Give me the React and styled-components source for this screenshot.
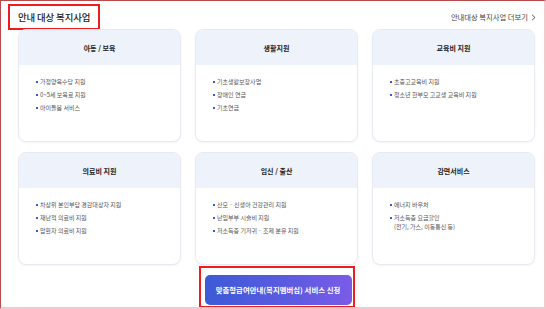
import React from "react";
import styled, { createGlobalStyle } from "styled-components";

const GlobalStyle = createGlobalStyle`
  html, body {
    margin: 0;
    padding: 0;
    background: #ffffff;
  }
  * {
    box-sizing: border-box;
  }
`;

const Frame = styled.div`
  width: 546px;
  height: 309px;
  overflow: hidden;
  border-left: 1px solid #b8494b;
  border-top: 1px solid #b8494b;
  border-right: 2px solid #f2cacd;
  border-bottom: 2px solid #f2cacd;
  padding: 3px 9px 0 17px;
  font-family: "Noto Sans CJK KR", "Noto Sans", sans-serif;
  color: #222;
`;

const TopRow = styled.div`
  display: flex;
  justify-content: space-between;
  align-items: center;
`;

const Title = styled.h2`
  margin: 0 0 0 -10px;
  height: 26px;
  padding: 0 8px;
  border: 2px solid #ee1c1c;
  display: flex;
  align-items: center;
  font-size: 9.4px;
  font-weight: 500;
  color: #222;
  letter-spacing: -0.1px;
`;

const MoreLink = styled.a`
  display: flex;
  align-items: center;
  gap: 3px;
  font-size: 7.3px;
  color: #444;
  text-decoration: none;
  margin-right: -1px;
`;

const Grid = styled.div`
  margin-top: -1px;
  display: grid;
  grid-template-columns: repeat(3, 1fr);
  grid-auto-rows: 113px;
  column-gap: 14px;
  row-gap: 10px;
`;

const Card = styled.div`
  border: 1px solid #e7eaf0;
  border-radius: 8px;
  overflow: hidden;
  background: #fff;
  box-shadow: 0 1px 2px rgba(30, 40, 80, 0.05);
`;

const CardHead = styled.div`
  height: 35px;
  background: #eef2fb;
  display: flex;
  align-items: center;
  justify-content: center;
  font-size: 7px;
  font-weight: 700;
  color: #222;
`;

const List = styled.ul`
  list-style: none;
  margin: 0;
  padding: 12px 8px 0 17px;
  display: flex;
  flex-direction: column;
  gap: 4px;
`;

const Item = styled.li`
  display: flex;
  gap: 2px;
  font-size: 6px;
  line-height: 9px;
  color: #555;
`;

const Bullet = styled.span`
  flex: none;
  width: 2px;
  height: 2px;
  margin-top: 4px;
  background: #3a5bd9;
`;

const Bottom = styled.div`
  display: flex;
  justify-content: center;
  margin-top: 1px;
`;

const Highlight = styled.div`
  border: 2px solid #ee1c1c;
  padding: 6px 1px 1px 4px;
`;

const ApplyButton = styled.button`
  width: 147px;
  height: 30px;
  border: 0;
  border-radius: 5px;
  background: linear-gradient(90deg, #3d5ad6 0%, #5a5be0 55%, #7b5be8 100%);
  color: #fff;
  font-family: "Noto Sans CJK KR", "Noto Sans", sans-serif;
  font-size: 7.4px;
  font-weight: 700;
  padding: 0;
  cursor: pointer;
`;

const cards = [
  { title: "아동 / 보육", items: [["가정양육수당 지원"], ["0~5세 보육료 지원"], ["아이돌봄 서비스"]] },
  { title: "생활지원", items: [["기초생활보장사업"], ["장애인 연금"], ["기초연금"]] },
  { title: "교육비 지원", items: [["초중고교육비 지원"], ["청소년 한부모 고교생 교육비 지원"]] },
  { title: "의료비 지원", items: [["차상위 본인부담 경감대상자 지원"], ["재난적 의료비 지원"], ["암환자 의료비 지원"]] },
  { title: "임신 / 출산", items: [["산모 · 신생아 건강관리 지원"], ["난임부부 시술비 지원"], ["저소득층 기저귀 · 조제 분유 지원"]] },
  { title: "감면서비스", items: [["에너지 바우처"], ["저소득층 요금할인", "(전기, 가스, 이동통신 등)"]] },
];

export default function App() {
  return (
    <>
      <GlobalStyle />
      <Frame>
        <TopRow>
          <Title>안내 대상 복지사업</Title>
          <MoreLink href="#">
            안내대상 복지사업 더보기
            <svg width="5" height="7" viewBox="0 0 5 7" fill="none">
              <path d="M1 0.8 L4 3.5 L1 6.2" stroke="#555" strokeWidth="0.9" />
            </svg>
          </MoreLink>
        </TopRow>
        <Grid>
          {cards.map((card) => (
            <Card key={card.title}>
              <CardHead>{card.title}</CardHead>
              <List>
                {card.items.map((lines) => (
                  <Item key={lines[0]}>
                    <Bullet />
                    <span>
                      {lines.map((line, i) => (
                        <React.Fragment key={line}>
                          {i > 0 && <br />}
                          {line}
                        </React.Fragment>
                      ))}
                    </span>
                  </Item>
                ))}
              </List>
            </Card>
          ))}
        </Grid>
        <Bottom>
          <Highlight>
            <ApplyButton type="button">맞춤형급여안내(복지멤버십) 서비스 신청</ApplyButton>
          </Highlight>
        </Bottom>
      </Frame>
    </>
  );
}
